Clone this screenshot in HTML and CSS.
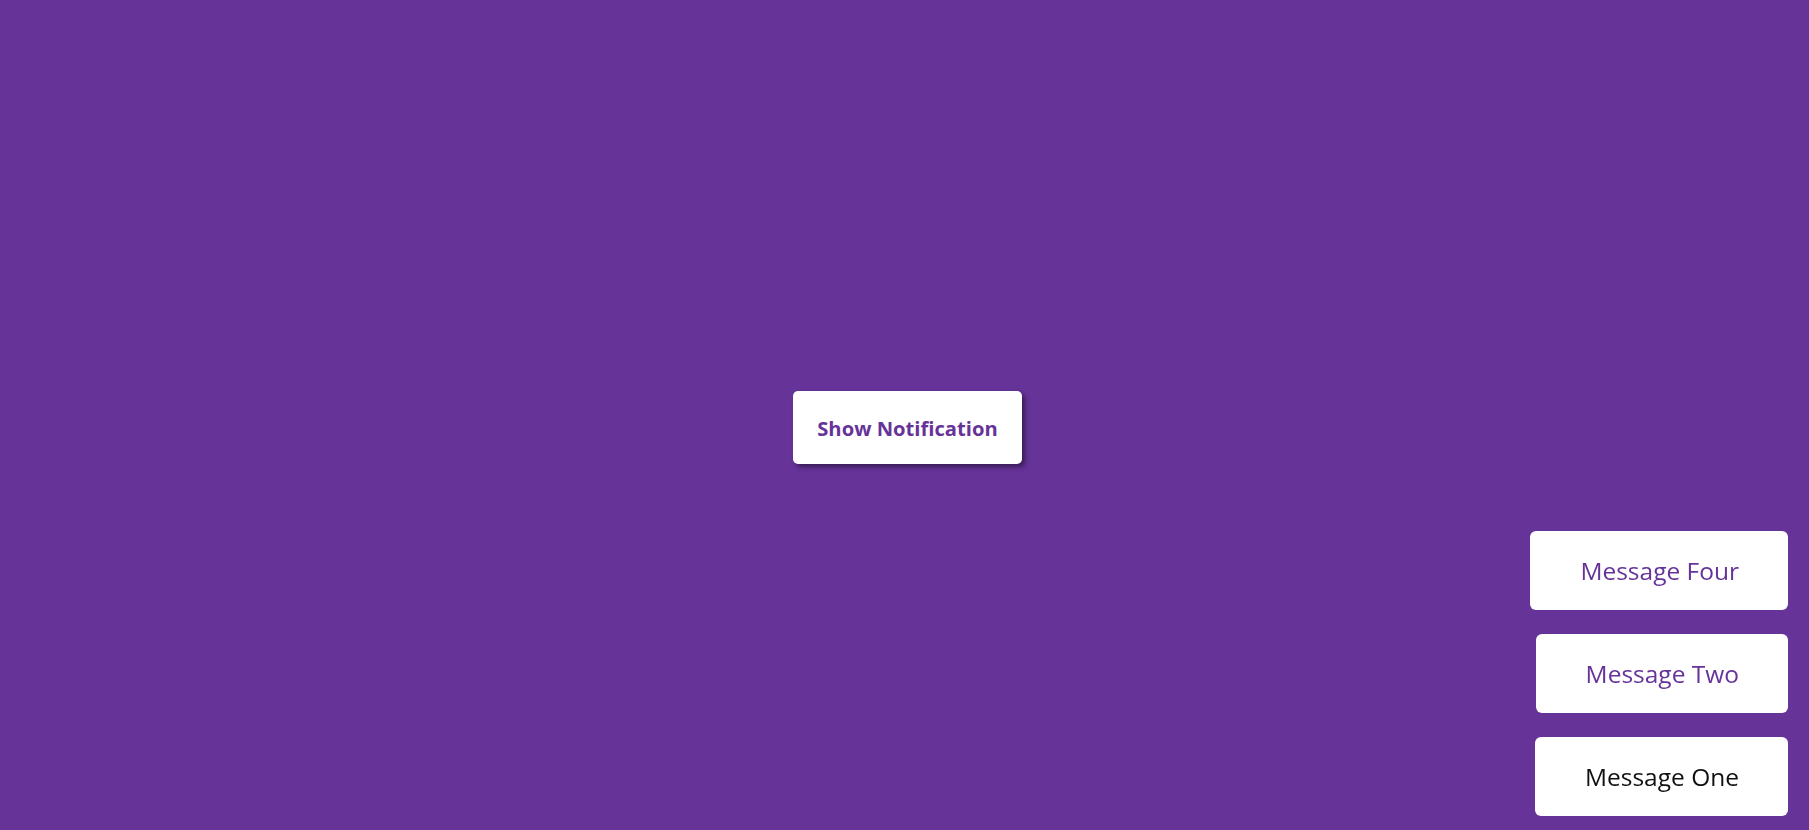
FILE: index.html
```html
<!DOCTYPE html>
<html lang="en">
<head>
<meta charset="utf-8">
<title>Notifications</title>
<link rel="stylesheet" href="styles.css">
</head>
<body>
<main class="stage">
  <button class="show-btn" type="button">Show Notification</button>
</main>
<div class="toasts">
  <div class="toast toast-purple">Message Four</div>
  <div class="toast toast-purple">Message Two</div>
  <div class="toast toast-dark">Message One</div>
</div>
</body>
</html>
```

FILE: styles.css
```css
* { box-sizing: border-box; }

html, body {
  margin: 0;
  height: 100%;
}

body {
  background: #663399;
  font-family: "Open Sans", "Noto Sans", sans-serif;
  overflow: hidden;
}

.stage {
  height: 100vh;
  display: flex;
  align-items: center;
  justify-content: center;
  padding: 25px 0 0 6px;
}

.show-btn {
  background: #ffffff;
  color: #663399;
  border: none;
  border-radius: 5px;
  font-family: inherit;
  font-weight: 700;
  font-size: 20.2px;
  line-height: 25px;
  padding: 25px 24px 23px;
  width: 229px;
  height: 73px;
  box-shadow: 3px 3px 5px rgba(0, 0, 0, 0.45);
  cursor: pointer;
  white-space: nowrap;
}

.toasts {
  position: fixed;
  right: 21px;
  bottom: 14px;
  display: flex;
  flex-direction: column;
  align-items: flex-end;
  gap: 24px;
}

.toast {
  background: #ffffff;
  border-radius: 6px;
  height: 79px;
  padding: 0 49px 0 50px;
  display: flex;
  align-items: center;
  justify-content: center;
  font-size: 24.5px;
  white-space: nowrap;
}

.toast-purple { color: #663399; }
.toast-dark { color: #111111; }
```
